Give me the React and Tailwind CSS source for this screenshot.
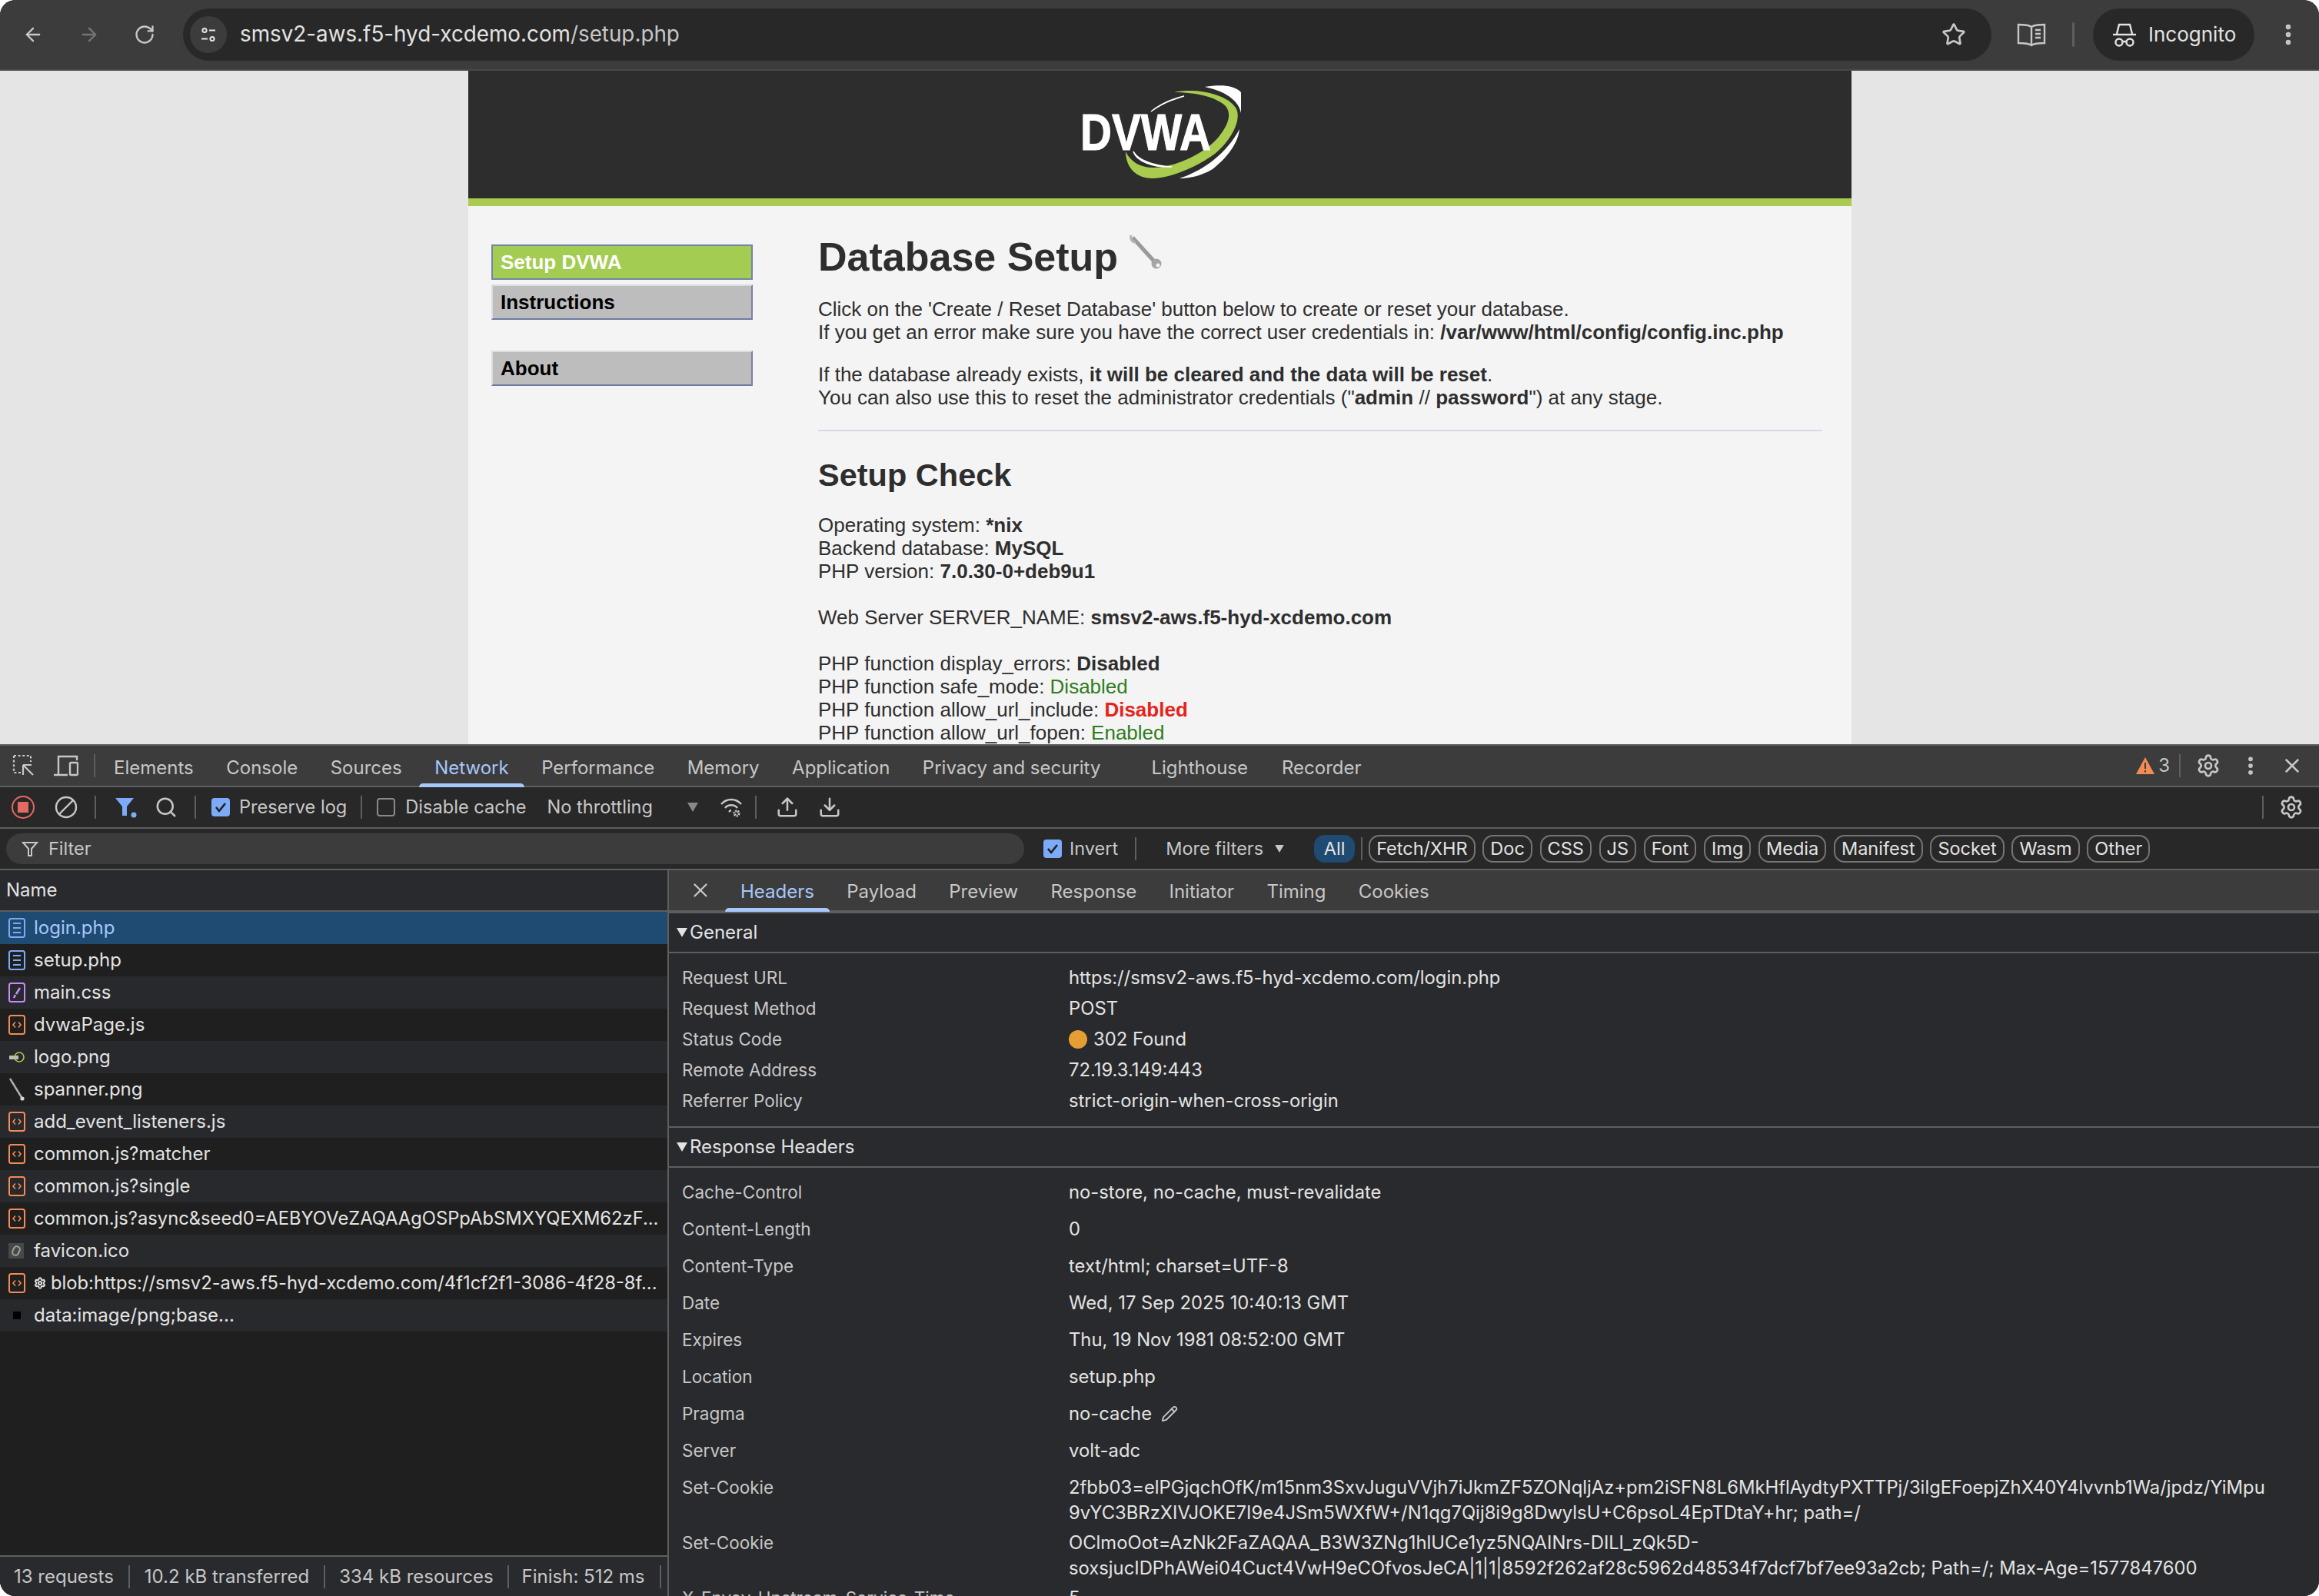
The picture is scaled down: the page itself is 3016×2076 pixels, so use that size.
import { ArrowLeft, ArrowRight, RotateCw, Star, EllipsisVertical, X, Search, Upload, Download, Settings, Pencil } from 'lucide-react'

const UI = "font-['Inter',sans-serif]"

const mainTabs = ['Elements', 'Console', 'Sources', 'Network', 'Performance', 'Memory', 'Application', 'Privacy and security']
const typeFilters = ['Fetch/XHR', 'Doc', 'CSS', 'JS', 'Font', 'Img', 'Media', 'Manifest', 'Socket', 'Wasm', 'Other']
const detailTabs = ['Headers', 'Payload', 'Preview', 'Response', 'Initiator', 'Timing', 'Cookies']

const requests = [
    { name: 'login.php', icon: 'doc', selected: true },
    { name: 'setup.php', icon: 'doc' },
    { name: 'main.css', icon: 'css' },
    { name: 'dvwaPage.js', icon: 'js' },
    { name: 'logo.png', icon: 'logo' },
    { name: 'spanner.png', icon: 'spanner' },
    { name: 'add_event_listeners.js', icon: 'js' },
    { name: 'common.js?matcher', icon: 'js' },
    { name: 'common.js?single', icon: 'js' },
    { name: 'common.js?async&seed0=AEBYOVeZAQAAgOSPpAbSMXYQEXM62zF...', icon: 'js', long: true },
    { name: 'favicon.ico', icon: 'favicon' },
    { name: 'blob:https://smsv2-aws.f5-hyd-xcdemo.com/4f1cf2f1-3086-4f28-8f...', icon: 'js', gear: true, long: true },
    { name: 'data:image/png;base...', icon: 'dot' },
]

const generalRows = [
    ['Request URL', 'https://smsv2-aws.f5-hyd-xcdemo.com/login.php'],
    ['Request Method', 'POST'],
    ['Status Code', '302 Found', 'status'],
    ['Remote Address', '72.19.3.149:443'],
    ['Referrer Policy', 'strict-origin-when-cross-origin'],
]

const responseRows = [
    ['Cache-Control', ['no-store, no-cache, must-revalidate']],
    ['Content-Length', ['0']],
    ['Content-Type', ['text/html; charset=UTF-8']],
    ['Date', ['Wed, 17 Sep 2025 10:40:13 GMT']],
    ['Expires', ['Thu, 19 Nov 1981 08:52:00 GMT']],
    ['Location', ['setup.php']],
    ['Pragma', ['no-cache'], 'edit'],
    ['Server', ['volt-adc']],
    ['Set-Cookie', ['2fbb03=elPGjqchOfK/m15nm3SxvJuguVVjh7iJkmZF5ZONqljAz+pm2iSFN8L6MkHflAydtyPXTTPj/3ilgEFoepjZhX40Y4lvvnb1Wa/jpdz/YiMpu', '9vYC3BRzXIVJOKE7I9e4JSm5WXfW+/N1qg7Qij8i9g8DwylsU+C6psoL4EpTDtaY+hr; path=/']],
    ['Set-Cookie', ['OClmoOot=AzNk2FaZAQAA_B3W3ZNg1hlUCe1yz5NQAINrs-DILl_zQk5D-', 'soxsjucIDPhAWei04Cuct4VwH9eCOfvosJeCA|1|1|8592f262af28c5962d48534f7dcf7bf7ee93a2cb; Path=/; Max-Age=1577847600']],
    ['X-Envoy-Upstream-Service-Time', ['5']],
]

const SiteSettingsIcon = () => (
    <svg width="24" height="24" viewBox="0 0 24 24" fill="none" stroke="#e3e3e3" strokeWidth="2">
        <circle cx="7" cy="6.5" r="2.6" />
        <path d="M13 6.5h8M3 17.5h8" />
        <circle cx="17" cy="17.5" r="2.6" />
    </svg>
)

const ReaderIcon = () => (
    <svg width="38" height="32" viewBox="0 0 38 32" fill="none" stroke="#c7c7c7" strokeWidth="2.4">
        <path d="M19 6C15 3 8 3 2 3v24c6 0 13 0 17 3 4-3 11-3 17-3V3c-6 0-13 0-17 3zM19 6v24" />
        <path d="M24 10h7M24 15h7M24 20h7" />
    </svg>
)

const IncognitoIcon = () => (
    <svg width="30" height="32" viewBox="0 0 30 32" fill="none" stroke="#e3e3e3" strokeWidth="2.4">
        <path d="M0 16h30" />
        <path d="M5 15 8 3h14l3 12" />
        <circle cx="8" cy="26" r="4.5" />
        <circle cx="22" cy="26" r="4.5" />
        <path d="M12.5 25h5" />
    </svg>
)

const InspectIcon = () => (
    <svg width="30" height="30" viewBox="0 0 30 30" fill="none" stroke="#c7c7c7" strokeWidth="2.2">
        <path d="M2 2h22v8M2 2v22h9" strokeDasharray="3 2.6" />
        <path d="M14 14v13M14 14h11M14 14l13 13" />
    </svg>
)

const DeviceIcon = () => (
    <svg width="32" height="28" viewBox="0 0 32 28" fill="none" stroke="#c7c7c7" strokeWidth="2.4">
        <path d="M0 26h18M6 26V2h24v5" />
        <rect x="21" y="10" width="10" height="16" rx="1.5" />
    </svg>
)

const RecordIcon = () => (
    <div className="flex h-[30px] w-[30px] items-center justify-center rounded-full border-2 border-[#e46962]">
        <div className="h-[14px] w-[14px] bg-[#e46962]" />
    </div>
)

const ClearIcon = () => (
    <svg width="30" height="30" viewBox="0 0 30 30" fill="none" stroke="#c7c7c7" strokeWidth="2.4">
        <circle cx="15" cy="15" r="13" />
        <path d="M6 24 24 6" />
    </svg>
)

const FilterDotIcon = () => (
    <svg width="30" height="30" viewBox="0 0 30 30" fill="#7cacf8">
        <path d="M1 3h24l-9 11v12h-6V14z" />
        <circle cx="25" cy="25" r="3.5" />
    </svg>
)

const WifiGearIcon = () => (
    <svg width="30" height="30" viewBox="0 0 30 30" fill="none" stroke="#c7c7c7" strokeWidth="2.4">
        <path d="M2 11c7-8 19-8 26 0M7 16c4-5 12-5 16 0M12 21c1-1 2-2 3-2" />
        <circle cx="22" cy="23" r="3" strokeWidth="3" strokeDasharray="2 1" />
    </svg>
)

const FunnelIcon = () => (
    <svg width="22" height="22" viewBox="0 0 22 22" fill="none" stroke="#c7c7c7" strokeWidth="2">
        <path d="M2 3h18l-7 8v9h-4v-9z" />
    </svg>
)

const WarningIcon = () => (
    <svg width="26" height="24" viewBox="0 0 26 24">
        <path d="M13 1 25 23H1z" fill="#f28b54" />
        <path d="M13 8v8M13 18v2.5" stroke="#3c3c3c" strokeWidth="2" />
    </svg>
)

const Caret = ({ className }) => (
    <svg width="14" height="12" viewBox="0 0 14 12" className={className}>
        <path d="M0 0h14L7 12z" fill="currentColor" />
    </svg>
)

const Checkbox = ({ checked }) =>
    checked ? (
        <div className="flex h-[24px] w-[24px] shrink-0 items-center justify-center rounded-[4px] bg-[#7cacf8]">
            <svg width="18" height="18" viewBox="0 0 18 18" fill="none" stroke="#1f1f1f" strokeWidth="2.6">
                <path d="m3 9 4 5 8-10" />
            </svg>
        </div>
    ) : (
        <div className="h-[24px] w-[24px] shrink-0 rounded-[4px] border-2 border-[#8a8a8a]" />
    )

const Divider = ({ className = 'mx-[17px]' }) => <div className={`h-[30px] w-[2px] shrink-0 bg-[#5e5e5e] ${className}`} />

const DvwaLogo = () => (
    <svg width="232" height="126" viewBox="0 0 232 126" className="mt-[18px]">
        <path d="M177 3C195 0 215 0 224 10L224 37C222 25 210 10 177 3z" fill="#fff" />
        <path d="M222 58C220 80 200 100 187 110C170 120 155 122 144 122C175 112 205 90 222 58z" fill="#fff" />
        <path d="M137 10C165 4 205 12 217 30C226 44 212 72 190 90C165 108 132 122 108 122C88 122 74 108 74 87C80 100 92 108 110 108C135 108 175 92 195 68C208 52 212 38 204 28C192 16 165 10 137 10z" fill="#a9cb4f" />
        <path d="M150 15C132 20 118 27 107 35C118 26 132 19 150 15zM84 87C90 98 110 106 134 107C110 108 88 100 84 87z" stroke="#fff" strokeWidth="1.5" fill="#fff" />
        <text x="15" y="85" fontFamily="Liberation Sans, Arial, sans-serif" fontWeight="700" fontSize="67" fill="#fff" stroke="#fff" strokeWidth="1" textLength="170" lengthAdjust="spacingAndGlyphs">DVWA</text>
    </svg>
)

const SpannerIcon = () => (
    <svg width="44" height="46" viewBox="0 0 44 46" fill="none">
        <path d="M4 4 33 36" stroke="#9a9a9a" strokeWidth="5" />
        <path d="M2 1c-1 5 1 9 6 9" stroke="#b5b5b5" strokeWidth="3" />
        <circle cx="35" cy="38" r="6.5" fill="#a5a5a5" />
        <circle cx="37" cy="40" r="2.5" fill="#f4f4f4" />
    </svg>
)

const RequestIcon = ({ type }) => {
    if (type === 'doc')
        return (
            <svg width="22" height="26" viewBox="0 0 22 26" fill="none" stroke="#7cacf8" strokeWidth="2">
                <rect x="1" y="1" width="20" height="24" rx="2.5" />
                <path d="M6 7h10M6 13h10M6 19h10" />
            </svg>
        )
    if (type === 'css')
        return (
            <svg width="22" height="26" viewBox="0 0 22 26" fill="none" stroke="#c58af9" strokeWidth="2">
                <rect x="1" y="1" width="20" height="24" rx="2.5" />
                <path d="M15 7 10 15M9 16l-2 4" strokeWidth="2.6" />
            </svg>
        )
    if (type === 'js')
        return (
            <svg width="22" height="26" viewBox="0 0 22 26" fill="none" stroke="#f28b54" strokeWidth="2">
                <rect x="1" y="1" width="20" height="24" rx="2.5" />
                <path d="M9 9.5 6 13l3 3.5M13 9.5l3 3.5-3 3.5" strokeWidth="1.6" />
            </svg>
        )
    if (type === 'logo')
        return (
            <svg width="22" height="26" viewBox="0 0 22 26" fill="none">
                <path d="M1 11h12v5H1z" fill="#bdbdbd" />
                <ellipse cx="14" cy="13" rx="6" ry="6" stroke="#a9cb4f" strokeWidth="1.6" />
            </svg>
        )
    if (type === 'spanner')
        return (
            <svg width="22" height="32" viewBox="0 0 22 32" fill="none">
                <path d="M2 2 18 28" stroke="#b0b0b0" strokeWidth="2.4" />
                <circle cx="18" cy="28" r="2.6" fill="#d8d8d8" />
            </svg>
        )
    if (type === 'favicon')
        return (
            <div className="flex h-[20px] w-[20px] items-center justify-center bg-[#45494d]">
                <div className="h-[14px] w-[10px] rotate-[25deg] rounded-full border-2 border-[#9aa88a]" />
            </div>
        )
    return <div className="ml-[6px] h-[10px] w-[10px] bg-black" />
}

const ChromeBar = () => (
    <div className="flex h-[92px] shrink-0 items-center border-b-2 border-[#484848] bg-[#3c3c3c] pl-[29px] text-[#e3e3e3]">
        <ArrowLeft size={28} color="#c7c7c7" strokeWidth={2} className="shrink-0" />
        <ArrowRight size={28} color="#757575" strokeWidth={2} className="ml-[45px] shrink-0" />
        <RotateCw size={28} color="#c7c7c7" strokeWidth={2} className="ml-[44px] shrink-0" />
        <div className="ml-[36px] flex h-[68px] w-[2352px] shrink-0 items-center rounded-full bg-[#282828] pl-[9px] pr-[33px]">
            <div className="flex h-[48px] w-[48px] items-center justify-center rounded-full bg-[#3c3c3c]">
                <SiteSettingsIcon />
            </div>
            <div className="ml-[17px] flex-1 text-[27.8px] leading-none">
                smsv2-aws.f5-hyd-xcdemo.com<span className="text-[#c7c7c7]">/setup.php</span>
            </div>
            <Star size={32} color="#c7c7c7" strokeWidth={2} />
        </div>
        <div className="ml-[33px] shrink-0">
            <ReaderIcon />
        </div>
        <div className="ml-[34px] h-[32px] w-[3px] shrink-0 rounded-full bg-[#5e5e5e]" />
        <div className="ml-[24px] flex h-[68px] w-[210px] shrink-0 items-center rounded-full bg-[#282828] pl-[26px]">
            <IncognitoIcon />
            <span className="ml-[16px] text-[26px] leading-none">Incognito</span>
        </div>
        <EllipsisVertical size={34} color="#c7c7c7" strokeWidth={2.6} className="ml-[27px] shrink-0" />
    </div>
)

const SideLink = ({ children, active, className = '' }) => (
    <div
        className={`flex h-[46px] items-center border-2 pl-[10px] text-[26px] font-bold leading-none ${className} ${
            active
                ? 'border-[#7584a8] bg-[#a3cc52] text-white'
                : 'border-[#dcdcdc] border-r-[#7584a8] border-b-[#6d7c9e] bg-[#bdbdbd] text-black'
        }`}
    >
        {children}
    </div>
)

const DvwaPage = () => (
    <div className="relative h-[876px] shrink-0 overflow-hidden bg-[#e5e5e5]">
        <div className="ml-[609px] flex h-full w-[1799px] flex-col bg-[#f4f4f4] font-['Liberation_Sans',Arial,sans-serif] text-[#2e2e2e]">
            <div className="flex h-[166px] shrink-0 justify-center bg-[#2d2d2d]">
                <div className="ml-[-6px]">
                    <DvwaLogo />
                </div>
            </div>
            <div className="h-[10px] shrink-0 bg-[#a9cb4f]" />
            <div className="flex pl-[30px]">
                <div className="mt-[50px] w-[340px] shrink-0">
                    <SideLink active>Setup DVWA</SideLink>
                    <SideLink className="mt-[6px]">Instructions</SideLink>
                    <SideLink className="mt-[40px]">About</SideLink>
                </div>
                <div className="ml-[85px] w-[1306px] text-[26px] leading-[30px]">
                    <div className="mt-[34px] flex items-center">
                        <h1 className="text-[52px] font-bold leading-[64px]">Database Setup</h1>
                        <div className="ml-[15px] mt-[-12px]">
                            <SpannerIcon />
                        </div>
                    </div>
                    <p className="mt-[21px]">
                        Click on the 'Create / Reset Database' button below to create or reset your database.
                        <br />
                        If you get an error make sure you have the correct user credentials in: <b>/var/www/html/config/config.inc.php</b>
                    </p>
                    <p className="mt-[25px]">
                        If the database already exists, <b>it will be cleared and the data will be reset</b>.
                        <br />
                        You can also use this to reset the administrator credentials ("<b>admin</b> // <b>password</b>") at any stage.
                    </p>
                    <div className="mt-[27px] h-[2px] bg-[#d5dbe6]" />
                    <h2 className="mt-[31px] text-[41.5px] font-bold leading-[52px]">Setup Check</h2>
                    <p className="mt-[24px]">
                        Operating system: <b>*nix</b>
                        <br />
                        Backend database: <b>MySQL</b>
                        <br />
                        PHP version: <b>7.0.30-0+deb9u1</b>
                    </p>
                    <p className="mt-[30px]">
                        Web Server SERVER_NAME: <b>smsv2-aws.f5-hyd-xcdemo.com</b>
                    </p>
                    <p className="mt-[30px]">
                        PHP function display_errors: <b>Disabled</b>
                        <br />
                        PHP function safe_mode: <span className="text-[#2f7d1e]">Disabled</span>
                        <br />
                        PHP function allow_url_include: <span className="font-bold text-[#e5231b]">Disabled</span>
                        <br />
                        PHP function allow_url_fopen: <span className="text-[#2f7d1e]">Enabled</span>
                    </p>
                </div>
            </div>
        </div>
    </div>
)

const MainTabs = () => (
    <div className="flex h-[56px] shrink-0 items-center border-y-2 border-[#5e5e5e] bg-[#3c3c3c] pl-[16px] pr-[20px] text-[24px] text-[#c7c7c7]">
        <InspectIcon />
        <div className="ml-[24px]">
            <DeviceIcon />
        </div>
        <Divider className="ml-[20px] mr-[24px]" />
        <div className="mt-[6px] flex gap-[42.5px]">
            {mainTabs.map((tab) => (
                <div key={tab} className={`relative leading-[50px] ${tab === 'Network' ? 'text-[#a8c7fa]' : ''}`}>
                    {tab}
                    {tab === 'Network' && (
                        <div className="absolute bottom-0 left-[-20px] right-[-20px] h-[5px] rounded-t-[5px] bg-[#a8c7fa]" />
                    )}
                </div>
            ))}
        </div>
        <div className="ml-[66px] mt-[6px] flex gap-[44px]">
            <span>Lighthouse</span>
            <span>Recorder</span>
        </div>
        <div className="ml-auto flex items-center">
            <WarningIcon />
            <span className="ml-[4px] text-[24px]">3</span>
            <Divider className="ml-[12px] mr-[20px]" />
            <Settings size={32} strokeWidth={2} />
            <EllipsisVertical size={30} strokeWidth={2.6} className="ml-[24px]" />
            <X size={30} strokeWidth={2} className="ml-[24px]" />
        </div>
    </div>
)

const NetworkToolbar = () => (
    <div className="flex h-[54px] shrink-0 items-center border-b-[2px] border-[#5e5e5e] bg-[#282828] pl-[15px] pr-[20px] text-[23.6px] text-[#c7c7c7]">
        <RecordIcon />
        <div className="ml-[26px]">
            <ClearIcon />
        </div>
        <Divider className="ml-[22px] mr-[24px]" />
        <FilterDotIcon />
        <Search size={30} strokeWidth={2} className="ml-[22px]" />
        <Divider className="ml-[22px] mr-[20px]" />
        <Checkbox checked />
        <span className="ml-[12px]">Preserve log</span>
        <Divider className="ml-[18px] mr-[19px]" />
        <Checkbox />
        <span className="ml-[13px]">Disable cache</span>
        <span className="ml-[27px]">No throttling</span>
        <Caret className="ml-[45px] text-[#8a8a8a]" />
        <div className="ml-[28px]">
            <WifiGearIcon />
        </div>
        <Divider className="ml-[16px] mr-[25px]" />
        <Upload size={30} strokeWidth={2} />
        <Download size={30} strokeWidth={2} className="ml-[25px]" />
        <div className="ml-auto flex items-center">
            <Divider className="mr-[20px]" />
            <Settings size={32} strokeWidth={2} />
        </div>
    </div>
)

const FilterRow = () => (
    <div className="flex h-[54px] shrink-0 items-center border-b-[2px] border-[#5e5e5e] bg-[#282828] pl-[8px] text-[23.5px] text-[#c7c7c7]">
        <div className="flex h-[40px] w-[1324px] shrink-0 items-center rounded-full bg-[#3c3c3c] pl-[20px]">
            <FunnelIcon />
            <span className="ml-[13px] text-[#c7c7c7]">Filter</span>
        </div>
        <div className="ml-[25px]">
            <Checkbox checked />
        </div>
        <span className="ml-[10px]">Invert</span>
        <Divider className="ml-[22px] mr-[38px]" />
        <span>More filters</span>
        <Caret className="ml-[15px] h-[10px] w-[12px]" />
        <div className="ml-[39px] flex h-[36px] w-[53px] shrink-0 items-center justify-center rounded-[14px] bg-[#1f4a72] text-[#e3e3e3]">All</div>
        <Divider className="mx-[8px]" />
        <div className="flex gap-[9.7px] text-[#e3e3e3]">
            {typeFilters.map((label) => (
                <div key={label} className="flex h-[36px] items-center rounded-[14px] border-2 border-[#757575] px-[8px]">
                    {label}
                </div>
            ))}
        </div>
    </div>
)

const RequestList = () => (
    <div className="flex w-[868px] shrink-0 flex-col bg-[#1f1f1f] text-[24px] text-[#e3e3e3]">
        <div className="flex h-[54px] shrink-0 items-center border-b-[2px] border-[#5e5e5e] bg-[#292a2d] pl-[8px]">Name</div>
        <div className="flex-1">
            {requests.map((req, i) => (
                <div
                    key={req.name}
                    className={`flex h-[42px] items-center whitespace-nowrap ${
                        req.selected ? 'bg-[#1f4a72] text-[#a8c7fa]' : i % 2 ? 'bg-[#1f1f1f]' : 'bg-[#28292c]'
                    }`}
                >
                    <div className="flex w-[44px] shrink-0 items-center pl-[11px]">
                        <RequestIcon type={req.icon} />
                    </div>
                    {req.gear && <Settings size={16} strokeWidth={3} className="mr-[6px] shrink-0" />}
                    <span className={req.long ? 'text-[23.75px]' : ''}>{req.name}</span>
                </div>
            ))}
        </div>
        <div className="flex h-[53px] shrink-0 items-center border-t-[2px] border-[#5e5e5e] bg-[#292a2d] text-[#c7c7c7]">
            <span className="pl-[18px]">13 requests</span>
            <Divider className="ml-[19px] mr-[19px]" />
            <span>10.2 kB transferred</span>
            <Divider className="ml-[19px] mr-[18px]" />
            <span>334 kB resources</span>
            <Divider className="ml-[18px] mr-[17px]" />
            <span>Finish: 512 ms</span>
            <Divider className="ml-[19px]" />
        </div>
    </div>
)

const SectionTitle = ({ children }) => (
    <div className="flex h-[54px] shrink-0 items-center border-y-2 border-[#5e5e5e] pl-[10px] text-[24px] text-[#e3e3e3]">
        <Caret className="mr-[3px]" />
        {children}
    </div>
)

const HeaderKey = ({ children }) => <div className="w-[520px] shrink-0 pl-[17px] text-[22.5px] text-[#c7c7c7]">{children}</div>

const DetailPane = () => (
    <div className="flex min-w-0 flex-1 flex-col overflow-hidden border-l-[2px] border-[#5e5e5e] bg-[#292a2d]">
        <div className="flex h-[56px] shrink-0 items-center border-b-[4px] border-[#5e5e5e] bg-[#3c3c3c] text-[24px] text-[#c7c7c7]">
            <X size={30} strokeWidth={1.8} className="ml-[26px]" />
            <div className="ml-[37px] mt-[4px] flex gap-[42.3px]">
                {detailTabs.map((tab) => (
                    <div key={tab} className={`relative leading-[52px] ${tab === 'Headers' ? 'text-[#a8c7fa]' : ''}`}>
                        {tab}
                        {tab === 'Headers' && (
                            <div className="absolute bottom-0 left-[-20px] right-[-20px] h-[5px] rounded-t-[5px] bg-[#a8c7fa]" />
                        )}
                    </div>
                ))}
            </div>
        </div>
        <div className="flex h-[52px] shrink-0 items-center border-b-[2px] border-[#5e5e5e] pl-[10px] text-[24px] text-[#e3e3e3]">
            <Caret className="mr-[3px]" />
            General
        </div>
        <div className="shrink-0 pb-[13px] pt-[12px]">
            {generalRows.map(([key, value, kind]) => (
                <div key={key} className="flex h-[40px] items-center whitespace-nowrap">
                    <HeaderKey>{key}</HeaderKey>
                    {kind === 'status' && <div className="mr-[8px] h-[24px] w-[24px] rounded-full bg-[#e59e33]" />}
                    <div className="text-[23.8px] text-[#e3e3e3]">{value}</div>
                </div>
            ))}
        </div>
        <SectionTitle>Response Headers</SectionTitle>
        <div className="shrink-0 pt-[7px]">
            {responseRows.map(([key, lines, kind], i) => (
                <div key={key + i} className={`flex whitespace-nowrap pt-[8px] leading-[33px] ${lines.length > 1 ? 'h-[72px]' : 'h-[48px]'}`}>
                    <HeaderKey>{key}</HeaderKey>
                    <div className="text-[23.8px] text-[#e3e3e3]">
                        {lines.map((line) => (
                            <div key={line} className="flex items-center">
                                {line}
                                {kind === 'edit' && <Pencil size={22} color="#c7c7c7" strokeWidth={2} className="ml-[12px]" />}
                            </div>
                        ))}
                    </div>
                </div>
            ))}
        </div>
    </div>
)

const App = () => (
    <div className={`flex h-[2076px] w-[3016px] flex-col overflow-hidden rounded-[20px] bg-[#282828] ${UI}`}>
        <ChromeBar />
        <DvwaPage />
        <MainTabs />
        <NetworkToolbar />
        <FilterRow />
        <div className="flex min-h-0 flex-1">
            <RequestList />
            <DetailPane />
        </div>
    </div>
)

export default App
